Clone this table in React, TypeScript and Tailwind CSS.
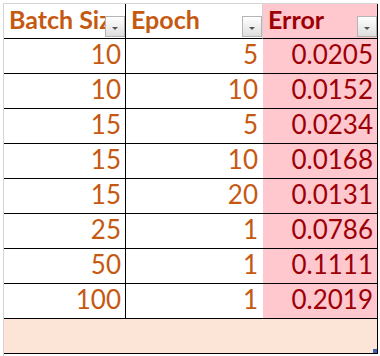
import React from 'react';

interface Row {
  batch: number;
  epoch: number;
  error: string;
}

const rows: Row[] = [
  { batch: 10, epoch: 5, error: '0.0205' },
  { batch: 10, epoch: 10, error: '0.0152' },
  { batch: 15, epoch: 5, error: '0.0234' },
  { batch: 15, epoch: 10, error: '0.0168' },
  { batch: 15, epoch: 20, error: '0.0131' },
  { batch: 25, epoch: 1, error: '0.0786' },
  { batch: 50, epoch: 1, error: '0.1111' },
  { batch: 100, epoch: 1, error: '0.2019' },
];

const font = { fontFamily: 'Lato, "Open Sans", sans-serif' };

function FilterButton() {
  return (
    <div className="shrink-0 w-[20px] h-[21px] mb-[1px] border border-[#b4b4b4] bg-gradient-to-b from-[#ffffff] to-[#dedede] flex items-center justify-center">
      <svg width="8" height="5" viewBox="0 0 8 5" className="mt-[3px]">
        <path d="M1 1 L7 1 L4 4 Z" fill="#555" />
      </svg>
    </div>
  );
}

function HeaderCell({ label, className, textClass }: { label: string; className: string; textClass: string }) {
  return (
    <div className={`h-[35px] border-b border-black flex items-end ${className}`}>
      <span className={`flex-1 min-w-0 overflow-hidden whitespace-nowrap pl-[5px] pb-[3px] text-[25px] leading-[31px] font-bold ${textClass}`}>
        {label}
      </span>
      <FilterButton />
    </div>
  );
}

export default function App() {
  return (
    <div className="w-[380px] h-[356px] bg-white overflow-hidden" style={font}>
      <div className="ml-[3px] mt-[3px] border-l border-t border-[#d4d4d4] w-[375px]">
        {/* header */}
        <div className="grid grid-cols-[122px_137px_115px]">
          <HeaderCell label="Batch Size" className="bg-white border-r border-r-black" textClass="text-[#c65911]" />
          <HeaderCell label="Epoch" className="bg-white border-r border-r-[#d4d4d4]" textClass="text-[#c65911]" />
          <HeaderCell label="Error" className="bg-[#ffc7ce] border-r border-r-black" textClass="text-[#9c0006]" />
        </div>

        {/* data rows */}
        {rows.map((r, i) => (
          <div key={i} className="grid grid-cols-[122px_137px_115px] h-[35px] text-[26px] leading-[26px]">
            <div className="border-b border-r border-black bg-white text-[#c65911] flex items-end justify-end pr-[4px] pb-[6px]">
              {r.batch}
            </div>
            <div className="border-b border-black bg-white text-[#c65911] flex items-end justify-end pr-[5px] pb-[6px]">
              {r.epoch}
            </div>
            <div className="border-b border-r border-black bg-[#ffc7ce] text-[#9c0006] flex items-end justify-end pr-[4px] pb-[6px]">
              {r.error}
            </div>
          </div>
        ))}

        {/* total row */}
        <div className="relative h-[35px] w-[374px] bg-[#fce4d6] border-b border-r border-black">
          <div className="absolute right-0 bottom-0 w-[4px] h-[4px] bg-[#3f5fae]" />
        </div>
      </div>
      <div className="ml-[3px] h-[3px] border-l border-[#d4d4d4]" />
    </div>
  );
}
